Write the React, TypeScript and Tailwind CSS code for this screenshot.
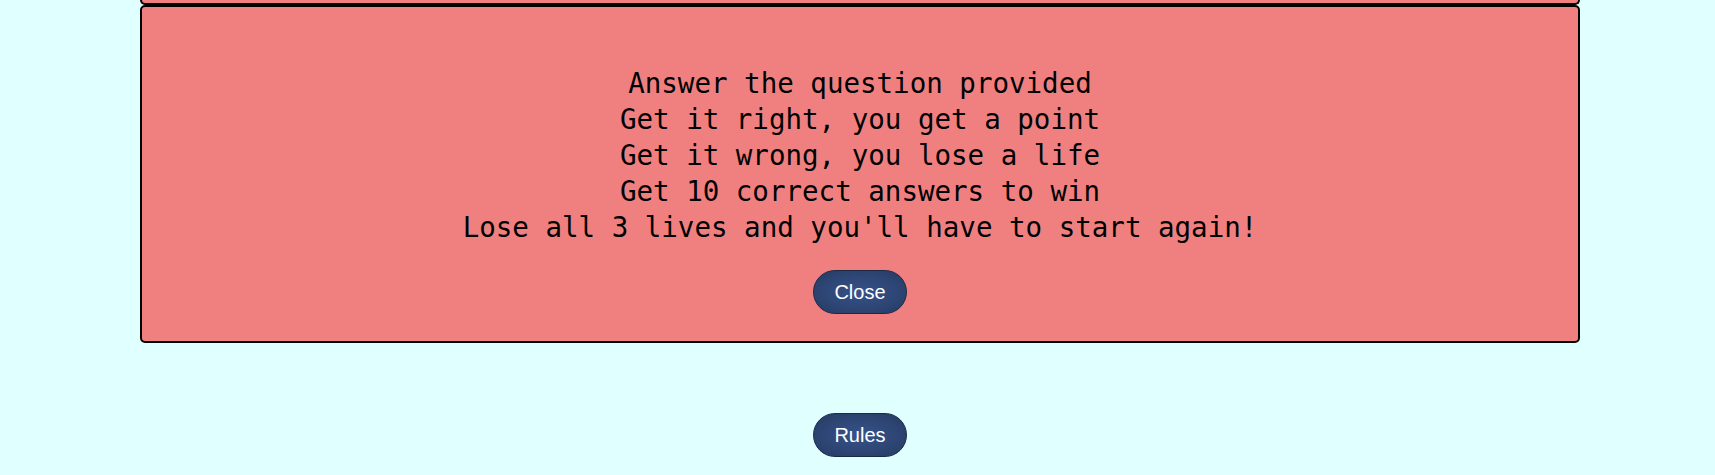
const rules = [
  'Answer the question provided',
  'Get it right, you get a point',
  'Get it wrong, you lose a life',
  'Get 10 correct answers to win',
  "Lose all 3 lives and you'll have to start again!",
]

function PillButton({ label }: { label: string }) {
  return (
    <button className="rounded-full border border-[#1c2a48] bg-[radial-gradient(ellipse_at_center,#36528a_0%,#2d4573_60%,#263a62_100%)] px-5 py-[10px] font-['Liberation_Sans',Arial,sans-serif] text-[20px] leading-[22px] text-white">
      {label}
    </button>
  )
}

export default function App() {
  return (
    <div className="min-h-[475px] w-full bg-[#e0ffff]">
      {/* previous card, mostly scrolled away */}
      <div className="ml-[140px] h-[5px] w-[1440px] rounded-b-[5px] border-x-2 border-b-2 border-black bg-[#f08080]" />

      <div className="ml-[140px] flex w-[1440px] flex-col items-center rounded-[5px] border-2 border-black bg-[#f08080] pt-[58px] pb-[27px]">
        <div className="text-center font-['DejaVu_Sans_Mono','Liberation_Mono',monospace] text-[27.5px] leading-[36px] text-black">
          {rules.map((line) => (
            <div key={line}>{line}</div>
          ))}
        </div>
        <div className="mt-[25px]">
          <PillButton label="Close" />
        </div>
      </div>

      <div className="ml-[140px] flex w-[1440px] justify-center pt-[70px]">
        <PillButton label="Rules" />
      </div>
    </div>
  )
}
